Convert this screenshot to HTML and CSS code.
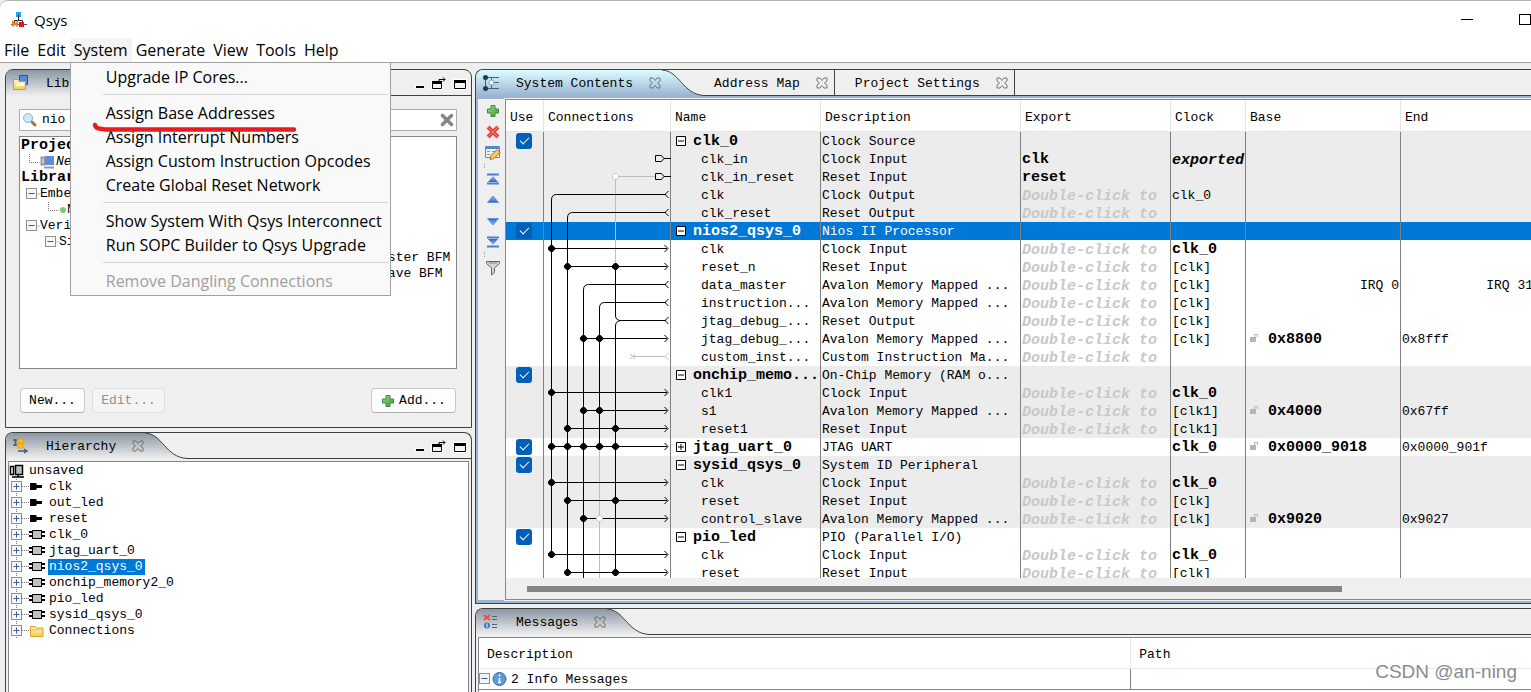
FILE: index.html
```html
<!DOCTYPE html>
<html lang="en">
<head>
<meta charset="utf-8">
<title>Qsys</title>
<link rel="stylesheet" href="styles.css">
</head>
<body>
<svg class="defs" width="0" height="0" aria-hidden="true">
  <defs>
    <linearGradient id="gray-tab" x1="0" y1="0" x2="0" y2="1"><stop offset="0" stop-color="#8a97a3"/><stop offset="1" stop-color="#efefef"/></linearGradient>
    <linearGradient id="blue-tab" x1="0" y1="0" x2="0" y2="1"><stop offset="0" stop-color="#dcfdff"/><stop offset="1" stop-color="#9ab4d2"/></linearGradient>
    <linearGradient id="blue-fill" x1="0" y1="0" x2="0" y2="1"><stop offset="0" stop-color="#9cc4f5"/><stop offset="1" stop-color="#2a62c4"/></linearGradient>
    <linearGradient id="green-fill" x1="0" y1="0" x2="1" y2="1"><stop offset="0" stop-color="#9ede8c"/><stop offset="1" stop-color="#3b9440"/></linearGradient>
    <linearGradient id="folder-fill" x1="0" y1="0" x2="0" y2="1"><stop offset="0" stop-color="#fff6c4"/><stop offset="1" stop-color="#f3cb4e"/></linearGradient>
  </defs>
  <symbol id="close" viewBox="0 0 12 12"><path d="M1 1h3l2 2.500L8 1h3v3L8.500 6 11 8v3H8L6 8.500 4 11H1V8l2.500-2L1 4z" fill="none" stroke="#6c6c6c" stroke-width=".9"/></symbol>
  <symbol id="minus" viewBox="0 0 16 16"><path d="M12.500 8h4" stroke="#777" stroke-dasharray="1 1"/><rect x="2.500" y="2.500" width="10" height="10" fill="#f6f6f6" stroke="#919191"/><path d="M4.500 7.500h6" stroke="#3a5a9c"/></symbol>
  <symbol id="plus" viewBox="0 0 20 16"><path d="M7.500 0v16M13 7.500h7" stroke="#777" stroke-dasharray="1 1"/><rect x="2.500" y="2.500" width="10" height="10" fill="#f6f6f6" stroke="#919191"/><path d="M4.500 7.500h6M7.500 4.500v6" stroke="#3a5a9c"/></symbol>
  <symbol id="elbow" viewBox="0 0 16 16"><path d="M5.500 0v8.500h10" fill="none" stroke="#777" stroke-dasharray="1 1"/></symbol>
  <symbol id="pin" viewBox="0 0 16 16"><path d="M1 4h6l1 2h5v3H8l-1 2H1z" fill="#000"/></symbol>
  <symbol id="chip" viewBox="0 0 16 16"><path d="M0 5h16M0 9h16" stroke="#000" stroke-width="2"/><rect x="3.500" y="3.500" width="9" height="8" fill="#bfbfbf" stroke="#000"/></symbol>
  <symbol id="folder" viewBox="0 0 16 16"><path d="M1.500 3.500h5l1 1.500h6.500v8.500h-12.500z" fill="url(#folder-fill)" stroke="#e0a030"/><path d="M2 7h5l1-1h6" stroke="#e8b548" fill="none"/></symbol>
  <symbol id="add" viewBox="0 0 14 14"><path d="M5 1.500h4V5h3.500v4H9v3.500H5V9H1.500V5H5z" fill="url(#green-fill)" stroke="#3d8a3d"/></symbol>
  <symbol id="win" viewBox="0 0 52 14"><g stroke="#fff" stroke-width="3" fill="none"><path d="M0 10h9M17.500 5.500h9v6h-9zM39.500 3.500h11v8h-11z"/></g><path d="M1 9h8v2H1z"/><path d="M17.500 4.500h9v7h-9zM39.500 3.500h11v8h-11z" fill="#f4f4f4" stroke="#000"/><path d="M17 4h10v3H17zM39 3h12v3H39z"/><path d="M24 4V2.500h6M28 0.500l2 2-2 2" fill="none" stroke="#000"/></symbol>
  <symbol id="tri" viewBox="0 0 14 14"><path d="M7 3l5.500 6.500h-11z" fill="url(#blue-fill)" stroke="#5f8fd8"/></symbol>
  <symbol id="tri-end" viewBox="0 0 14 14"><path d="M1 2.500h12M1 11.500h12" stroke="#4a7fd0" stroke-width="2"/><path d="M7 4l5 6H2z" fill="url(#blue-fill)"/></symbol>
  <symbol id="open" viewBox="0 0 10 10"><path d="M.5.5h9v9h-9z" fill="#fff" stroke="#000"/><path d="M2 5h6" stroke="#000"/></symbol>
  <symbol id="shut" viewBox="0 0 10 10"><path d="M.5.5h9v9h-9z" fill="#fff" stroke="#000"/><path d="M2 5h6M5 2v6" stroke="#000"/></symbol>
  <symbol id="lock" viewBox="0 0 10 10"><path d="M1 4h6v5H1z" fill="#b5b5b5"/><path d="M5.500 4V1.500h3V4" fill="none" stroke="#b5b5b5"/></symbol>
  <symbol id="dot" viewBox="0 0 8 8"><path d="M3 .5h2L7.500 3v2L5 7.500H3L.5 5V3z"/></symbol>
  <symbol id="in" viewBox="0 0 6 8"><path d="M1.500 .5l3.500 3.500-3.500 3.500" fill="none" stroke="#000"/></symbol>
  <symbol id="out" viewBox="0 0 6 8"><path d="M4.500 .5L1 4l3.500 3.500" fill="none" stroke="#000"/></symbol>
  <symbol id="port" viewBox="0 0 16 8"><path d="M.5 1h6L9 4 6.500 7h-6zM9 4h7" fill="none" stroke="#000"/></symbol>
</svg>

<header class="titlebar">
  <svg width="16" height="17" viewBox="0 0 16 17"><path d="M5 1h5v5H5z" fill="#21a3ec"/><path d="M7.500 4v5M3.500 12V9.500h8V12" fill="none" stroke="#222"/><path d="M0 13.500h16" stroke="#555"/><path d="M2 15.500v-4l2 2 2-2v4" fill="none" stroke="#f08020" stroke-width="2"/><path d="M8 11h5v5H8z" fill="#e01030"/></svg>
  <h1>Qsys</h1>
  <div class="window-buttons">
    <button aria-label="Minimize"><svg width="14" height="14"><path d="M1 6.500h12" stroke="#000"/></svg></button>
    <button aria-label="Maximize"><svg width="14" height="14"><rect x="1.500" y="1.500" width="11" height="10" fill="none" stroke="#000"/></svg></button>
  </div>
</header>
<nav class="menubar">
  <button>File</button><button>Edit</button>
  <div class="menu-holder">
    <button class="active">System</button>
    <div class="menu">
      <button>Upgrade IP Cores...</button>
      <hr>
      <button>Assign Base Addresses</button>
      <button>Assign Interrupt Numbers</button>
      <button>Assign Custom Instruction Opcodes</button>
      <button>Create Global Reset Network</button>
      <hr>
      <button>Show System With Qsys Interconnect</button>
      <button>Run SOPC Builder to Qsys Upgrade</button>
      <hr>
      <button disabled>Remove Dangling Connections</button>
      <svg class="marker" width="206" height="12" viewBox="0 0 206 12"><path d="M3 3c1 4 5 4 12 4.500H202" fill="none" stroke="#e81b1e" stroke-width="4.500" stroke-linecap="round"/></svg>
    </div>
  </div>
  <button>Generate</button><button>View</button><button>Tools</button><button>Help</button>
</nav>

<main class="workspace">
  <div class="side">
    <section class="panel library">
      <div class="tabs">
        <div class="tab">
          <svg width="18" height="18" viewBox="0 0 18 18"><path d="M7.500 1.500h8v9h-8z" fill="#5a8ae0" stroke="#2450a8"/><path d="M1.500 5.500h5l1 2h6v8h-12z" fill="url(#folder-fill)" stroke="#d89a28"/><path d="M4 9h8v3H4z" fill="#fff8dc"/></svg>
          <span>Library</span><svg width="12" height="12"><use href="#close"/></svg>
        </div>
        <svg class="curve" width="42" height="26"><path d="M0 0C18 1 20 24 42 25.500V26H0z" fill="url(#gray-tab)"/><path d="M0 0C18 1 20 24 42 25.500" fill="none" stroke="#404040"/></svg>
        <div class="rest"><svg width="52" height="14"><use href="#win"/></svg></div>
      </div>
      <div class="library-body">
        <label class="search">
          <svg width="16" height="16" viewBox="0 0 16 16"><path d="M10 10l3 3" stroke="#a8743c" stroke-width="3" stroke-linecap="round"/><circle cx="6" cy="6" r="4.500" fill="#cfe6fb" stroke="#8ab0d8"/></svg>
          <input type="text" value="nio" aria-label="Search library">
          <svg width="14" height="14" viewBox="0 0 14 14"><path d="M2.500 2.500l9 9M11.500 2.500l-9 9" stroke="#858585" stroke-width="3.500" stroke-linecap="round"/></svg>
        </label>
        <ul class="tree library-tree">
          <li><b>Project</b></li>
          <li class="l1"><svg width="16" height="16"><use href="#elbow"/></svg><svg width="16" height="16" viewBox="0 0 16 16"><path d="M1.500 3.500h3v7h-3zM4 13.500h10" fill="none" stroke="#999" stroke-width="2"/><path d="M5 2h9v9H5z" fill="#5f8fdc"/></svg><i>New Component...</i></li>
          <li><b>Library</b></li>
          <li class="l1"><svg width="16" height="16"><use href="#minus"/></svg>Embedded Processors</li>
          <li class="l2"><svg width="16" height="16"><use href="#elbow"/></svg><svg width="8" height="8"><circle cx="4" cy="4" r="3" fill="#7cc970"/></svg>Nios II Processor</li>
          <li class="l1"><svg width="16" height="16"><use href="#minus"/></svg>Verification</li>
          <li class="l2"><svg width="16" height="16"><use href="#minus"/></svg>Simulation</li>
          <li class="l3">Altera Nios II Custom Instruction Master BFM</li>
          <li class="l3">Altera Nios II Custom Instruction Slave BFM</li>
        </ul>
        <div class="actions">
          <button>New...</button><button disabled>Edit...</button>
          <button class="add"><svg width="14" height="14"><use href="#add"/></svg>Add...</button>
        </div>
      </div>
    </section>
    <section class="panel hierarchy">
      <div class="tabs">
        <div class="tab">
          <svg width="18" height="18" viewBox="0 0 18 18"><path d="M3.500 2v7M1 3h4M1 8h4" stroke="#46607c" stroke-width="1.500"/><path d="M6 2h5v4H6zM6 7h5v4H6z" fill="#ffc21a" stroke="#e8a000"/><path d="M6 14h8M12 12l3 2-3 2" stroke="#46607c" fill="none" stroke-width="1.500"/></svg>
          <span>Hierarchy</span><svg width="12" height="12"><use href="#close"/></svg>
        </div>
        <svg class="curve" width="42" height="26"><path d="M0 0C18 1 20 24 42 25.500V26H0z" fill="url(#gray-tab)"/><path d="M0 0C18 1 20 24 42 25.500" fill="none" stroke="#404040"/></svg>
        <div class="rest"><svg width="52" height="14"><use href="#win"/></svg></div>
      </div>
      <ul class="tree hierarchy-tree">
        <li><svg width="18" height="16" viewBox="0 0 18 16"><path d="M1.500 3.500h3v8h-3zM3 14h12" fill="none" stroke="#000" stroke-width="1.500"/><path d="M6.500 2.500h7v9h-7zM9 11v3" fill="#bfbfbf" stroke="#000" stroke-width="1.500"/></svg>unsaved</li>
        <li class="node"><svg width="20" height="16"><use href="#plus"/></svg><svg width="16" height="16"><use href="#pin"/></svg><span>clk</span></li>
        <li class="node"><svg width="20" height="16"><use href="#plus"/></svg><svg width="16" height="16"><use href="#pin"/></svg><span>out_led</span></li>
        <li class="node"><svg width="20" height="16"><use href="#plus"/></svg><svg width="16" height="16"><use href="#pin"/></svg><span>reset</span></li>
        <li class="node"><svg width="20" height="16"><use href="#plus"/></svg><svg width="16" height="16"><use href="#chip"/></svg><span>clk_0</span></li>
        <li class="node"><svg width="20" height="16"><use href="#plus"/></svg><svg width="16" height="16"><use href="#chip"/></svg><span>jtag_uart_0</span></li>
        <li class="node"><svg width="20" height="16"><use href="#plus"/></svg><svg width="16" height="16"><use href="#chip"/></svg><span class="selected">nios2_qsys_0</span></li>
        <li class="node"><svg width="20" height="16"><use href="#plus"/></svg><svg width="16" height="16"><use href="#chip"/></svg><span>onchip_memory2_0</span></li>
        <li class="node"><svg width="20" height="16"><use href="#plus"/></svg><svg width="16" height="16"><use href="#chip"/></svg><span>pio_led</span></li>
        <li class="node"><svg width="20" height="16"><use href="#plus"/></svg><svg width="16" height="16"><use href="#chip"/></svg><span>sysid_qsys_0</span></li>
        <li class="node"><svg width="20" height="16"><use href="#plus"/></svg><svg width="16" height="16"><use href="#folder"/></svg><span>Connections</span></li>
      </ul>
    </section>
  </div>

  <div class="content">
    <section class="panel system">
      <div class="tabs">
        <div class="tab blue">
          <svg width="18" height="18" viewBox="0 0 18 18"><path d="M3.500 3v12M3 3.500h14M3 14.500h14M9 8.500h8M9.500 3v11" stroke="#4a6078" fill="none"/><circle cx="3.500" cy="3.500" r="2.500" fill="#1f3a58"/><circle cx="3.500" cy="14.500" r="2.500" fill="#1f3a58"/><circle cx="9.500" cy="8.500" r="2.500" fill="#fff" stroke="#8aa0b4"/></svg>
          <span>System Contents</span><svg width="12" height="12"><use href="#close"/></svg>
        </div>
        <svg class="curve" width="42" height="26"><path d="M0 0C18 1 20 24 42 25.500V26H0z" fill="url(#blue-tab)"/><path d="M0 0C18 1 20 24 42 25.500" fill="none" stroke="#404040"/></svg>
        <div class="plain-tab first"><span>Address Map</span><svg width="12" height="12"><use href="#close"/></svg></div>
        <div class="plain-tab"><span>Project Settings</span><svg width="12" height="12"><use href="#close"/></svg></div>
        <div class="rest"></div>
      </div>
      <div class="system-body">
        <div class="toolbar">
          <button aria-label="Add"><svg width="14" height="14"><use href="#add"/></svg></button>
          <button aria-label="Remove"><svg width="14" height="14" viewBox="0 0 14 14"><path d="M2 2l10 10M12 2L2 12" stroke="#e8413f" stroke-width="4"/><path d="M2.500 2.500l9 9M11.500 2.500l-9 9" stroke="#ff8078"/></svg></button>
          <button aria-label="Edit"><svg width="16" height="16" viewBox="0 0 16 16"><path d="M.5 1.500h14v11H.500z" fill="#eef4fc" stroke="#5b87c8"/><path d="M1 3h13" stroke="#5b87c8" stroke-width="2"/><path d="M2 6.500h3M7 6.500h5M2 9.500h3" stroke="#6f94cc"/><path d="M5 14.500l1-4 6-6 3 3-6 6z" fill="#ffc857" stroke="#a8742a"/></svg></button>
          <i></i>
          <button aria-label="Move to top"><svg width="14" height="14"><use href="#tri-end"/></svg></button>
          <button aria-label="Move up"><svg width="14" height="14"><use href="#tri"/></svg></button>
          <button aria-label="Move down"><svg class="flip" width="14" height="14"><use href="#tri"/></svg></button>
          <button aria-label="Move to bottom"><svg class="flip" width="14" height="14"><use href="#tri-end"/></svg></button>
          <i></i>
          <button aria-label="Filter"><svg width="16" height="16" viewBox="0 0 16 16"><path d="M1.500 1.500h13v2L9.500 8v4.500l-3 2.500V8L1.500 3.500z" fill="#d5d5d5" stroke="#666"/><path d="M4 3h8" stroke="#888"/></svg></button>
        </div>
        <div class="grid-box">
          <div class="grid-view">
            <table class="grid">
              <colgroup><col class="c-use"><col class="c-con"><col class="c-name"><col class="c-desc"><col class="c-exp"><col class="c-clk"><col class="c-base"><col></colgroup>
              <thead><tr><th>Use</th><th>Connections</th><th>Name</th><th>Description</th><th>Export</th><th>Clock</th><th>Base</th><th>End</th></tr></thead>
              <tbody>
                <tr class="g"><td><input type="checkbox" checked aria-label="Use clk_0"></td><td></td><td class="mod"><button aria-label="Collapse"><svg width="10" height="10"><use href="#open"/></svg></button>clk_0</td><td>Clock Source</td><td></td><td></td><td></td><td></td></tr>
                <tr class="g"><td></td><td></td><td class="sub">clk_in</td><td>Clock Input</td><td><b>clk</b></td><td class="exported">exported</td><td></td><td></td></tr>
                <tr class="g"><td></td><td></td><td class="sub">clk_in_reset</td><td>Reset Input</td><td><b>reset</b></td><td></td><td></td><td></td></tr>
                <tr class="g"><td></td><td></td><td class="sub">clk</td><td>Clock Output</td><td class="hint">Double-click to</td><td>clk_0</td><td></td><td></td></tr>
                <tr class="g"><td></td><td></td><td class="sub">clk_reset</td><td>Reset Output</td><td class="hint">Double-click to</td><td></td><td></td><td></td></tr>
                <tr class="sel"><td><input type="checkbox" checked aria-label="Use nios2_qsys_0"></td><td></td><td class="mod"><button aria-label="Collapse"><svg width="10" height="10"><use href="#open"/></svg></button>nios2_qsys_0</td><td>Nios II Processor</td><td></td><td></td><td></td><td></td></tr>
                <tr><td></td><td></td><td class="sub">clk</td><td>Clock Input</td><td class="hint">Double-click to</td><td><b>clk_0</b></td><td></td><td></td></tr>
                <tr><td></td><td></td><td class="sub">reset_n</td><td>Reset Input</td><td class="hint">Double-click to</td><td>[clk]</td><td></td><td></td></tr>
                <tr><td></td><td></td><td class="sub">data_master</td><td>Avalon Memory Mapped ...</td><td class="hint">Double-click to</td><td>[clk]</td><td class="irq">IRQ 0</td><td class="irq">IRQ 31</td></tr>
                <tr><td></td><td></td><td class="sub">instruction...</td><td>Avalon Memory Mapped ...</td><td class="hint">Double-click to</td><td>[clk]</td><td></td><td></td></tr>
                <tr><td></td><td></td><td class="sub">jtag_debug_...</td><td>Reset Output</td><td class="hint">Double-click to</td><td>[clk]</td><td></td><td></td></tr>
                <tr><td></td><td></td><td class="sub">jtag_debug_...</td><td>Avalon Memory Mapped ...</td><td class="hint">Double-click to</td><td>[clk]</td><td class="base"><svg width="10" height="10"><use href="#lock"/></svg><b>0x8800</b></td><td>0x8fff</td></tr>
                <tr><td></td><td></td><td class="sub">custom_inst...</td><td>Custom Instruction Ma...</td><td class="hint">Double-click to</td><td></td><td></td><td></td></tr>
                <tr class="g"><td><input type="checkbox" checked aria-label="Use onchip_memory2_0"></td><td></td><td class="mod"><button aria-label="Collapse"><svg width="10" height="10"><use href="#open"/></svg></button>onchip_memo...</td><td>On-Chip Memory (RAM o...</td><td></td><td></td><td></td><td></td></tr>
                <tr class="g"><td></td><td></td><td class="sub">clk1</td><td>Clock Input</td><td class="hint">Double-click to</td><td><b>clk_0</b></td><td></td><td></td></tr>
                <tr class="g"><td></td><td></td><td class="sub">s1</td><td>Avalon Memory Mapped ...</td><td class="hint">Double-click to</td><td>[clk1]</td><td class="base"><svg width="10" height="10"><use href="#lock"/></svg><b>0x4000</b></td><td>0x67ff</td></tr>
                <tr class="g"><td></td><td></td><td class="sub">reset1</td><td>Reset Input</td><td class="hint">Double-click to</td><td>[clk1]</td><td></td><td></td></tr>
                <tr><td><input type="checkbox" checked aria-label="Use jtag_uart_0"></td><td></td><td class="mod"><button aria-label="Expand"><svg width="10" height="10"><use href="#shut"/></svg></button>jtag_uart_0</td><td>JTAG UART</td><td></td><td><b>clk_0</b></td><td class="base"><svg width="10" height="10"><use href="#lock"/></svg><b>0x0000_9018</b></td><td>0x0000_901f</td></tr>
                <tr class="g"><td><input type="checkbox" checked aria-label="Use sysid_qsys_0"></td><td></td><td class="mod"><button aria-label="Collapse"><svg width="10" height="10"><use href="#open"/></svg></button>sysid_qsys_0</td><td>System ID Peripheral</td><td></td><td></td><td></td><td></td></tr>
                <tr class="g"><td></td><td></td><td class="sub">clk</td><td>Clock Input</td><td class="hint">Double-click to</td><td><b>clk_0</b></td><td></td><td></td></tr>
                <tr class="g"><td></td><td></td><td class="sub">reset</td><td>Reset Input</td><td class="hint">Double-click to</td><td>[clk]</td><td></td><td></td></tr>
                <tr class="g"><td></td><td></td><td class="sub">control_slave</td><td>Avalon Memory Mapped ...</td><td class="hint">Double-click to</td><td>[clk]</td><td class="base"><svg width="10" height="10"><use href="#lock"/></svg><b>0x9020</b></td><td>0x9027</td></tr>
                <tr><td><input type="checkbox" checked aria-label="Use pio_led"></td><td></td><td class="mod"><button aria-label="Collapse"><svg width="10" height="10"><use href="#open"/></svg></button>pio_led</td><td>PIO (Parallel I/O)</td><td></td><td></td><td></td><td></td></tr>
                <tr><td></td><td></td><td class="sub">clk</td><td>Clock Input</td><td class="hint">Double-click to</td><td><b>clk_0</b></td><td></td><td></td></tr>
                <tr><td></td><td></td><td class="sub">reset</td><td>Reset Input</td><td class="hint">Double-click to</td><td>[clk]</td><td></td><td></td></tr>
              </tbody>
            </table>
            <svg class="wires" width="127" height="450" viewBox="0 0 127 450">
              <g fill="none" stroke="#bdbdbd">
                <path d="M112 44.500H71.500V134M88 224.500H121M86 222l5 5M91 222l-5 5M124.500 221l-3.500 3.500 3.500 3.500"/>
                <path d="M55.500 314V450"/>
              </g>
              <g fill="none" stroke="#000">
                <path d="M122 62.500H12.500Q7.500 62.500 7.500 68V422.500"/>
                <path d="M122 80.500H28.500Q23.500 80.500 23.500 86V440.500"/>
                <path d="M122 152.500H44.500Q39.500 152.500 39.500 158V450"/>
                <path d="M122 170.500H60.500Q55.500 170.500 55.500 176V314.500"/>
                <path d="M71.500 134.500V184Q72 188.500 77 188.500H122M77 188.500Q71.500 189 71.500 194V440.500"/>
                <path d="M7.500 116.500H123M23.500 134.500H123M39.500 206.500H123M7.500 260.500H123M39.500 278.500H123M23.500 296.500H123M7.500 314.500H123M7.500 350.500H123M23.500 368.500H123M39.500 386.500H123M7.500 422.500H123M23.500 440.500H123"/>
              </g>
            </svg>
          </div>
          <div class="scrollbar"><div></div></div>
        </div>
      </div>
    </section>
    <section class="panel messages">
      <div class="tabs">
        <div class="tab">
          <svg width="18" height="18" viewBox="0 0 18 18"><path d="M2 2l6 5M8 2L2 7" stroke="#ee4a48" stroke-width="2"/><circle cx="5" cy="12.500" r="3" fill="#3d7ab8"/><path d="M5 10.500v4" stroke="#fff"/><path d="M10 3.500h5M10 6.500h5M10 11.500h5M10 14.500h5" stroke="#4a6484"/></svg>
          <span>Messages</span><svg width="12" height="12"><use href="#close"/></svg>
        </div>
        <svg class="curve" width="42" height="26"><path d="M0 0C18 1 20 24 42 25.500V26H0z" fill="url(#gray-tab)"/><path d="M0 0C18 1 20 24 42 25.500" fill="none" stroke="#404040"/></svg>
        <div class="rest"></div>
      </div>
      <div class="message-box">
        <table class="message-table">
          <thead><tr><th>Description</th><th>Path</th></tr></thead>
          <tbody><tr><td><div class="message"><svg width="13" height="16" viewBox="2 0 13 16"><rect x="2.500" y="2.500" width="10" height="10" fill="#f6f6f6" stroke="#919191"/><path d="M4.500 7.500h6" stroke="#3a5a9c"/></svg><svg width="16" height="16"><circle cx="7.500" cy="8" r="6.500" fill="#5f9ad6" stroke="#39689f"/><path d="M7.500 3.500v2M7.500 7v4.500M6 11.500h3" stroke="#fff" stroke-width="1.500"/></svg><span>2 Info Messages</span></div></td><td></td></tr></tbody>
        </table>
      </div>
    </section>
  </div>
</main>
<div class="watermark">CSDN @an-ning</div>
<script src="wires.js"></script>
</body>
</html>
```

FILE: wires.js
```
(function () {
  var svg = document.querySelector(".wires");
  var columns = [7.5, 23.5, 39.5, 55.5, 71.5];
  function y(row) { return 8.5 + 18 * row; }
  function stamp(id, cx, cy, w, h) {
    var use = document.createElementNS("http://www.w3.org/2000/svg", "use");
    use.setAttribute("href", "#" + id);
    use.setAttribute("x", cx - w / 2);
    use.setAttribute("y", cy - h / 2);
    use.setAttribute("width", w);
    use.setAttribute("height", h);
    svg.appendChild(use);
    return use;
  }
  // Each entry: table row, then the connection columns joined on that row.
  [[6, 0], [7, 1, 4], [11, 2, 3], [14, 0], [15, 2, 3], [16, 1, 4], [17, 0, 1, 2, 3, 4],
   [19, 0], [20, 1, 4], [21, 2], [23, 0], [24, 1, 4]].forEach(function (entry) {
    entry.slice(1).forEach(function (c) { stamp("dot", columns[c], y(entry[0]), 8, 8); });
    stamp("in", 122, y(entry[0]), 6, 8);
  });
  [3, 4, 8, 9, 10].forEach(function (row) { stamp("out", 123, y(row), 6, 8); });
  [1, 2].forEach(function (row) { stamp("port", 119, y(row), 16, 8); });
  stamp("dot", columns[4], y(2), 7, 7).setAttribute("class", "free");
  stamp("dot", columns[3], y(21), 7, 7).setAttribute("class", "free");
})();
```

FILE: styles.css
```css
* { box-sizing: border-box; }
body {
  margin: 0;
  height: 100vh;
  display: flex;
  flex-direction: column;
  overflow: hidden;
  background: #efefef;
  color: #000;
  font: 13px/16px "Liberation Mono", "DejaVu Sans Mono", monospace;
}
button, input { font: inherit; color: inherit; margin: 0; }
button { border: 0; background: none; padding: 0; }
ul { list-style: none; margin: 0; padding: 0; }
svg { flex: none; display: block; }
.defs { position: absolute; }
b, .mod { font-size: 15px; font-weight: bold; }

.titlebar {
  flex: none;
  height: 38px;
  display: flex;
  align-items: center;
  gap: 7px;
  padding-left: 11px;
  background: #fff;
  border-top: 1px solid #b4b4b4;
  border-top-left-radius: 8px;
}
.titlebar h1 { margin: 0; font: 15px/20px "Open Sans", sans-serif; }
.window-buttons { margin-left: auto; margin-right: -1px; display: flex; gap: 44px; }

.menubar {
  flex: none;
  height: 25px;
  display: flex;
  background: #fff;
  border-bottom: 1px solid #a0a0a0;
  font: 16px/24px "Open Sans", sans-serif;
}
.menubar > button, .menu-holder > button { padding: 0 4px; white-space: nowrap; }
.menu-holder { position: relative; }
.menu-holder > .active { background: #f3f3f3; border-radius: 3px 3px 0 0; }
.menu {
  position: absolute;
  z-index: 5;
  top: 24px;
  left: 0;
  width: 321px;
  padding: 3px 2px 1px;
  background: #f9f9f9;
  border: 1px solid #a0a0a0;
}
.menu button { display: block; width: 100%; height: 24px; padding: 0 0 2px 33px; line-height: 22px; text-align: left; white-space: nowrap; }
.menu button:disabled { color: #a0a0a0; }
.menu hr { margin: 4px 0 7px 30px; border: 0; border-top: 1px solid #d5d5d5; }
.marker { position: absolute; left: 21px; top: 59px; }

.workspace { flex: 1; min-height: 0; display: flex; gap: 3px; padding: 6px 0 0 5px; }
.side { flex: none; width: 467px; display: flex; flex-direction: column; gap: 4px; }
.content { flex: 1; min-width: 0; display: flex; flex-direction: column; gap: 4px; }
.panel { border: 1px solid #404040; border-radius: 8px 8px 0 0; display: flex; flex-direction: column; overflow: hidden; }
.content .panel { border-right: 0; border-top-right-radius: 0; }
.hierarchy, .messages { flex: 1; min-height: 0; border-bottom: 0; }

.tabs { flex: none; height: 26px; display: flex; white-space: nowrap; }
.tab { display: flex; align-items: center; padding: 0 1px 0 6px; background: linear-gradient(#8a97a3, #efefef); }
.tab.blue { background: linear-gradient(#dcfdff, #9ab4d2); }
.tab span { margin: 0 16px; }
.tab span, .plain-tab span { padding-top: 2px; }
.plain-tab, .rest { border-bottom: 1px solid #404040; }
.plain-tab { display: flex; align-items: center; gap: 16px; padding: 0 6px 0 20px; border-right: 1px solid #404040; }
.plain-tab.first { padding-left: 10px; }
.rest { flex: 1; display: flex; align-items: center; justify-content: flex-end; padding: 2px 4px 0 0; }

.library-body { display: flex; flex-direction: column; padding: 13px 14px 14px 13px; }
.search { display: flex; align-items: center; height: 22px; padding: 0 2px; background: #fff; border: 1px solid #adadad; }
.search input { flex: 1; min-width: 0; border: 0; outline: 0; padding: 0 4px; background: none; }
.tree li { display: flex; align-items: center; height: 16px; white-space: nowrap; }
.library-tree { height: 233px; margin-top: 5px; padding: 1px; background: #fff; border: 1px solid #828790; }
.l1 { padding-left: 3px; }
.l2 { padding-left: 22px; }
.l3 { padding-left: 86px; }
.actions { display: flex; gap: 7px; margin: 19px 1px 0; }
.actions button {
  height: 25px;
  width: 65px;
  background: #fdfdfd;
  border: 1px solid #c8c8c8;
  border-bottom-color: #b0b0b0;
  border-radius: 4px;
}
.actions button:disabled { width: 73px; color: #909090; background: #f4f4f4; border-color: #dedede; }
.actions .add { width: 85px; margin-left: auto; display: flex; align-items: center; justify-content: center; gap: 4px; }

.hierarchy-tree { flex: 1; margin: 2px 2px 0; padding-top: 1px; background: #fff; border: 1px solid #828790; border-bottom: 0; }
.hierarchy-tree > li:first-child svg { margin-right: 2px; }
.node span { margin-left: 3px; padding: 0 2px 0 1px; }
.node .selected { background: #0078d7; color: #fff; }

.system-body { display: flex; padding: 3px 0 3px 2px; background: #9ab4d2; }
.toolbar { flex: none; width: 27px; display: flex; flex-direction: column; align-items: center; padding: 1px 0 0 3px; background: #efefef; }
.toolbar button { width: 20px; height: 21px; display: grid; place-items: center; }
.toolbar i { height: 5px; width: 18px; border-left: 1px dotted #999; }
.flip { transform: scaleY(-1); }
.grid-box { flex: 1; min-width: 0; border: 1px solid #828790; border-right: 0; outline: 1px solid #efefef; background: #efefef; }
.grid-view { position: relative; height: 478px; overflow: hidden; background: #fff; }
.grid { table-layout: fixed; border-collapse: separate; border-spacing: 0; width: 100%; min-width: 1029px; }
.c-use { width: 38px; }
.c-con { width: 127px; }
.c-name, .c-exp { width: 150px; }
.c-desc { width: 200px; }
.c-clk { width: 75px; }
.c-base { width: 155px; }
.grid th { height: 32px; padding: 4px 0 0 4px; font-weight: normal; text-align: left; border-right: 1px solid #e5e5e5; border-bottom: 1px solid #e5e5e5; }
.grid td { height: 18px; padding: 2px 0 0 1px; border-right: 1px solid #808080; white-space: nowrap; overflow: hidden; }
.grid td:first-child { padding: 0; }
.grid .g { background: #ececec; }
.grid .sel { background: #0078d7; color: #fff; }
.grid .sub { padding-left: 30px; }
.grid .mod button { display: inline-block; height: 10px; margin: 0 7px 0 4px; vertical-align: -1px; }
.grid .hint, .grid .exported { padding-top: 4px; line-height: 14px; font-size: 15px; font-weight: bold; font-style: italic; }
.grid .hint { color: #c8c8c8; }
.grid .irq { text-align: right; padding-right: 1px; }
.base svg { display: inline-block; margin: 0 9px 0 2px; }
.grid input {
  appearance: none;
  display: grid;
  place-items: center;
  width: 16px;
  height: 16px;
  margin-left: 10px;
  border-radius: 3px;
  background: #005fb8;
}
.grid input::after { content: ""; width: 8px; height: 4px; margin-top: -3px; border: solid #fff; border-width: 0 0 1px 1px; transform: rotate(-45deg); }
.wires { position: absolute; left: 38px; top: 32px; }
.free { fill: #fff; stroke: #bdbdbd; }
.scrollbar { height: 21px; padding: 8px 189px 0 21px; background: #efefef; }
.scrollbar div { height: 6px; background: #858585; }

.message-box { flex: 1; margin: 2px 0 0 2px; border: 1px solid #828790; border-width: 1px 0 0 1px; background: #fff; }
.message-table { width: 100%; table-layout: fixed; border-collapse: separate; border-spacing: 0; }
.message-table th { height: 31px; padding: 4px 8px 0; font-weight: normal; text-align: left; border-bottom: 1px solid #e9e9e9; }
.message-table th:first-child { width: 62%; border-right: 1px solid #e5e5e5; }
.message-table td { height: 21px; padding: 0; border-bottom: 1px solid #808080; }
.message-table td:first-child { border-right: 1px solid #808080; }
.message { display: flex; align-items: center; }
.message span { margin-left: 3px; padding-top: 2px; }
.watermark { position: absolute; right: 14px; bottom: 8px; font: 19px/24px "Liberation Sans", sans-serif; color: #8c8c8c; }
```
